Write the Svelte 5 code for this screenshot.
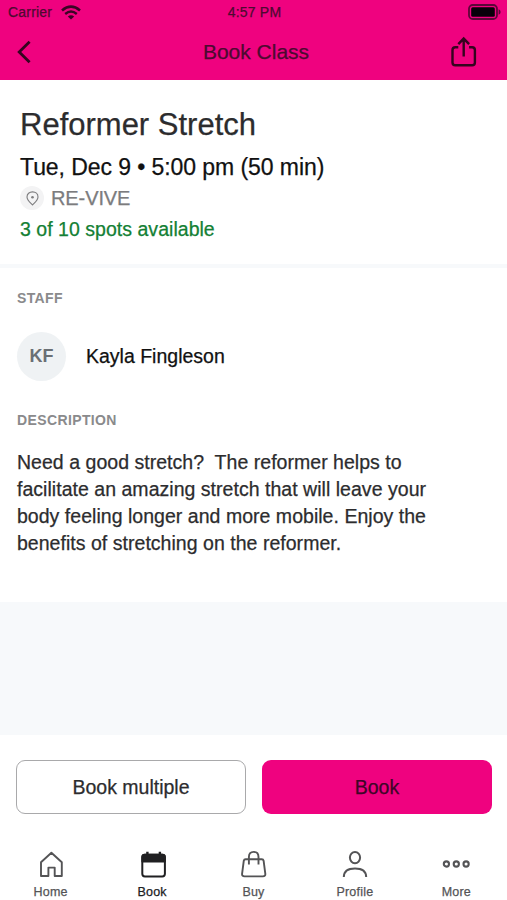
<script lang="ts">
const staff = { initials: "KF", name: "Kayla Fingleson" };

const description =
  "Need a good stretch?\u00a0 The reformer helps to facilitate an amazing stretch that will leave your body feeling longer and more mobile. Enjoy the benefits of stretching on the reformer.";

const tabs = ["Home", "Book", "Buy", "Profile", "More"];

let activeTab = $state("Book");
</script>

<div class="screen">
  <header class="header">
    <div class="status-bar">
      <div class="carrier">
        <span>Carrier</span>
        <svg class="wifi" width="20" height="15" viewBox="0 0 20 15" fill="none" stroke="currentColor">
          <path d="M1 5.4Q10-2.2 19 5.4" stroke-width="2.6" />
          <path d="M4.2 9Q10 4.2 15.8 9" stroke-width="2.4" />
          <path d="M10 14.6L6.8 11.5Q10 8.9 13.2 11.5Z" fill="currentColor" stroke="none" />
        </svg>
      </div>
      <span class="time">4:57 PM</span>
      <svg class="battery" width="33" height="16" viewBox="0 0 33 16">
        <rect x="1" y="1" width="28" height="14" rx="3.8" fill="none" stroke="#5c0638" stroke-width="1.8" />
        <rect x="3.2" y="3.2" width="23.6" height="9.6" rx="1.5" fill="#08000a" />
        <path d="M30.6 5.2Q32.6 6 32.6 8T30.6 10.8Z" fill="#5c0638" />
      </svg>
    </div>
    <div class="nav-bar">
      <button class="icon-button" aria-label="Back">
        <svg width="16" height="24" viewBox="0 0 16 24" fill="none" stroke="currentColor" stroke-width="2.8">
          <path d="M13.6 1.8L3.2 12L13.6 22.2" />
        </svg>
      </button>
      <h1>Book Class</h1>
      <button class="icon-button share" aria-label="Share">
        <svg width="28" height="32" viewBox="0 0 28 32" fill="none" stroke="currentColor" stroke-width="2.4">
          <path d="M8.3 11.2H5.3Q2.5 11.2 2.5 14V26.4Q2.5 29.2 5.3 29.2H22.1Q24.9 29.2 24.9 26.4V14Q24.9 11.2 22.1 11.2H19.1" />
          <path d="M13.7 20.4V3.2M8.3 8.2L13.7 2.6L19.1 8.2" />
        </svg>
      </button>
    </div>
  </header>

  <section class="summary">
    <h2>Reformer Stretch</h2>
    <p class="when">Tue, Dec 9 • 5:00 pm (50 min)</p>
    <p class="where">
      <span class="pin">
        <svg width="13" height="15" viewBox="0 0 13 15" fill="none" stroke="currentColor" stroke-width="1.1">
          <path d="M6.5 14C4.4 11.7 1 9 1 5.9C1 2.9 3.4 .9 6.5 .9S12 2.9 12 5.9C12 9 8.6 11.7 6.5 14Z" />
          <circle cx="6.5" cy="6.2" r="1.3" fill="currentColor" stroke="none" />
        </svg>
      </span>
      <span>RE-VIVE</span>
    </p>
    <p class="spots">3 of 10 spots available</p>
  </section>

  <section class="details">
    <h3>STAFF</h3>
    <div class="staff">
      <span class="avatar">{staff.initials}</span>
      <span class="staff-name">{staff.name}</span>
    </div>
    <h3>DESCRIPTION</h3>
    <p class="description">{description}</p>
  </section>

  <footer class="footer">
    <div class="actions">
      <button class="button">Book multiple</button>
      <button class="button primary">Book</button>
    </div>
    <nav class="tabs">
      {#each tabs as tab}
        <button class="tab" class:active={activeTab === tab} onclick={() => (activeTab = tab)}>
          <svg width="30" height="30" viewBox="0 0 30 30" fill="none" stroke="currentColor" stroke-width="1.9" stroke-linejoin="round">
            {#if tab === "Home"}
              <path d="M5 12.2L15.4 2.8L25.8 12.2V26H18.7V17.6H12.4V26H5Z" />
            {:else if tab === "Book"}
              <rect x="5.3" y="4.8" width="22.6" height="21.6" rx="2.6" stroke-width="2" />
              <path d="M5.3 11.6V7.2Q5.3 4.8 7.7 4.8H25.5Q27.9 4.8 27.9 7.2V11.6Z" fill="currentColor" />
              <path d="M10.4 1.8V6M22.9 1.8V6" stroke-width="2.4" />
            {:else if tab === "Buy"}
              <path d="M7.6 9.2H23.8Q25.3 9.2 25.6 10.7L27.3 23.6Q27.6 26.4 24.9 26.4H6.5Q3.8 26.4 4.1 23.6L5.8 10.7Q6.1 9.2 7.6 9.2Z" />
              <path d="M10.9 14.6V7Q10.9 1.9 15.7 1.9T20.5 7V14.6" />
            {:else if tab === "Profile"}
              <ellipse cx="15" cy="7.6" rx="5.1" ry="5.7" stroke-width="2" />
              <path d="M3.8 27Q4 18.6 15 18.6T26.2 27" stroke-width="2" />
            {:else}
              <circle cx="5.4" cy="14" r="2.6" stroke-width="2.1" />
              <circle cx="15.3" cy="14" r="2.6" stroke-width="2.1" />
              <circle cx="25.1" cy="14" r="2.6" stroke-width="2.1" />
            {/if}
          </svg>
          <span>{tab}</span>
        </button>
      {/each}
    </nav>
  </footer>
</div>

<style>
  :global(body) {
    background: #fff;
  }

  .screen {
    display: flex;
    flex-direction: column;
    width: 507px;
    height: 900px;
    overflow: hidden;
    background: #f7f9fb;
    color: #2c2c2e;
    font-family: "Liberation Sans", Arial, sans-serif;
    -webkit-text-stroke: 0.25px currentColor;
  }

  h1,
  h2,
  h3,
  p {
    margin: 0;
    font-weight: 400;
  }

  button {
    margin: 0;
    padding: 0;
    border: none;
    background: none;
    color: inherit;
    font-family: inherit;
  }

  svg {
    display: block;
  }

  .header {
    height: 80px;
    flex: none;
    background: #ef027f;
    color: #4c0a30;
  }

  .status-bar {
    display: grid;
    grid-template-columns: 1fr auto 1fr;
    align-items: center;
    height: 24px;
    padding: 0 6px 0 8px;
    font-size: 14px;
    letter-spacing: 0.2px;
  }

  .carrier {
    display: flex;
    align-items: center;
    gap: 9px;
  }

  .wifi {
    color: #3a0525;
  }

  .battery {
    justify-self: end;
  }

  .nav-bar {
    display: grid;
    grid-template-columns: 1fr auto 1fr;
    align-items: center;
    height: 55px;
    padding: 0 29px 0 34px;
  }

  .nav-bar h1 {
    font-size: 21px;
  }

  .icon-button {
    justify-self: start;
    margin-left: -18px;
    color: #34041f;
  }

  .icon-button.share {
    justify-self: end;
    margin-left: 0;
  }

  .summary {
    height: 184px;
    flex: none;
    box-sizing: border-box;
    padding: 24px 20px 0;
    background: #fff;
  }

  .summary h2 {
    font-size: 31px;
    line-height: 42px;
  }

  .when {
    margin-top: 5px;
    color: #111;
    font-size: 23px;
    line-height: 32px;
    letter-spacing: -0.07px;
  }

  .where {
    display: flex;
    align-items: center;
    gap: 7px;
    height: 30px;
    color: #7c7c7e;
    font-size: 20px;
    letter-spacing: -0.1px;
  }

  .pin {
    display: flex;
    align-items: center;
    justify-content: center;
    width: 24px;
    height: 24px;
    border-radius: 50%;
    background: #f3f3f4;
  }

  .spots {
    color: #138034;
    font-size: 19.5px;
    line-height: 32px;
    letter-spacing: 0.03px;
  }

  .details {
    height: 334px;
    flex: none;
    box-sizing: border-box;
    margin-top: 4px;
    padding: 21px 17px 0;
    background: #fff;
  }

  .details h3 {
    color: #8a8a8c;
    font-size: 14px;
    font-weight: 700;
    line-height: 18px;
    letter-spacing: 0.38px;
    -webkit-text-stroke: 0;
  }

  .staff {
    display: flex;
    align-items: center;
    gap: 20px;
    margin: 25px 0 30px;
  }

  .avatar {
    display: flex;
    align-items: center;
    justify-content: center;
    width: 49px;
    height: 49px;
    border-radius: 50%;
    background: #eff2f4;
    color: #6a6f74;
    font-size: 18px;
    font-weight: 700;
    -webkit-text-stroke: 0;
  }

  .staff-name {
    color: #111;
    font-size: 19.5px;
  }

  .description {
    width: 430px;
    margin-top: 20px;
    font-size: 19.5px;
    line-height: 27px;
    letter-spacing: 0.03px;
  }

  .footer {
    height: 165px;
    margin-top: auto;
    background: #fff;
  }

  .actions {
    display: grid;
    grid-template-columns: 1fr 1fr;
    gap: 16px;
    padding: 25px 15px 0 16px;
  }

  .button {
    height: 54px;
    border: 1px solid #a9a9ab;
    border-radius: 9px;
    font-size: 19.5px;
  }

  .button.primary {
    border: none;
    background: #ef027f;
    color: #3e0527;
  }

  .tabs {
    display: grid;
    grid-template-columns: repeat(5, 1fr);
    padding-top: 36px;
  }

  .tab {
    display: flex;
    flex-direction: column;
    align-items: center;
    gap: 5px;
    color: #545456;
    font-size: 12.5px;
    line-height: 15px;
    letter-spacing: 0.2px;
  }

  .tab.active {
    color: #202022;
  }
</style>
